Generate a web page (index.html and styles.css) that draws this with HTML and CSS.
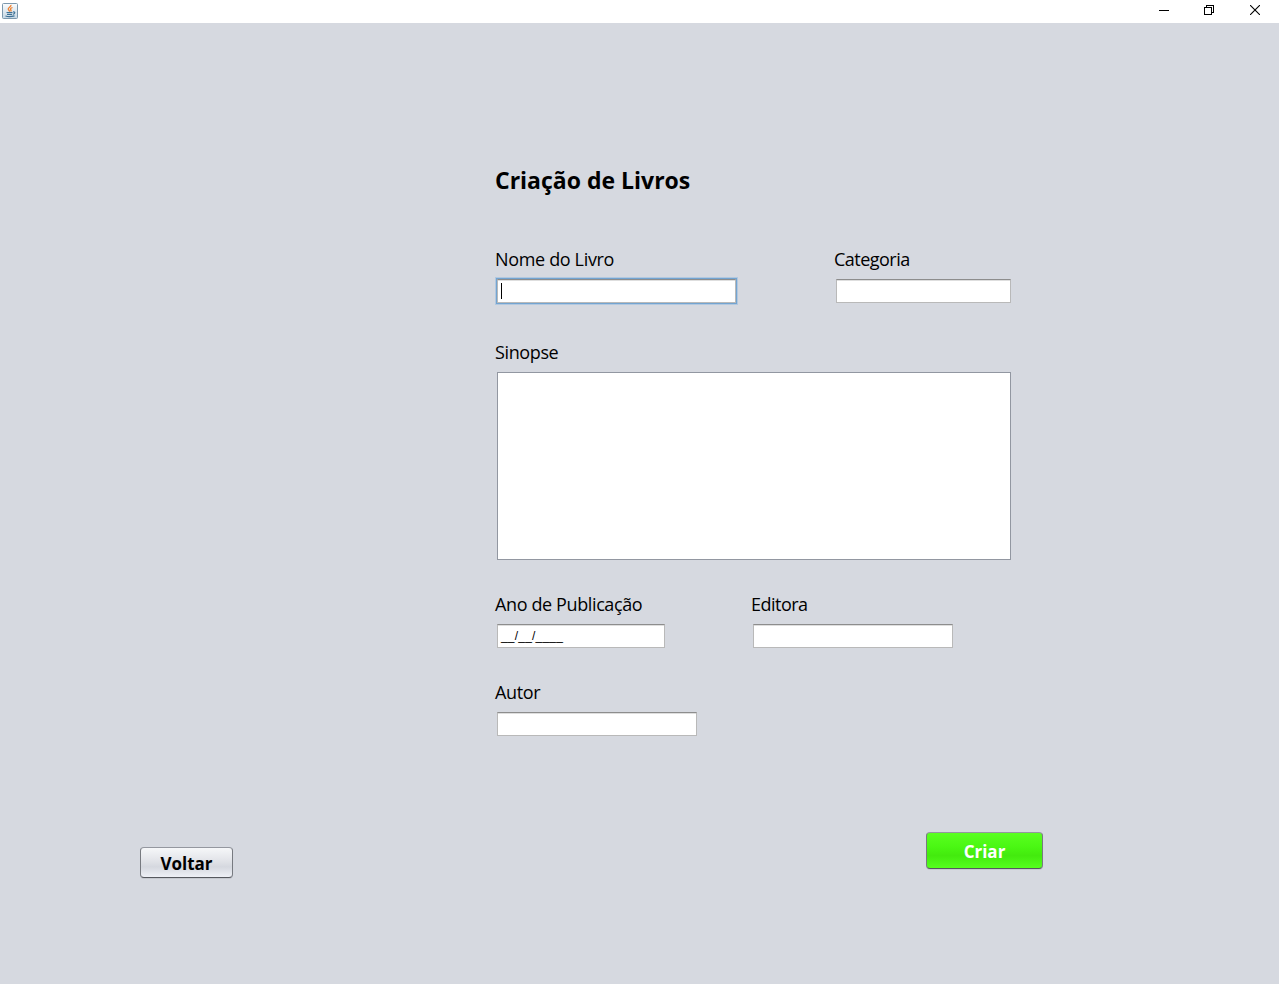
FILE: index.html
```html
<!DOCTYPE html>
<html lang="pt-BR">
<head>
<meta charset="utf-8">
<title>Criação de Livros</title>
<link rel="stylesheet" href="styles.css">
</head>
<body>
<header class="titlebar">
  <svg class="app-icon" width="16" height="16" viewBox="0 0 16 16" fill="none">
    <defs><linearGradient id="tile" x2="0" y2="1"><stop stop-color="#fafcfd"/><stop offset="1" stop-color="#c5d7e4"/></linearGradient></defs>
    <rect x=".5" y=".5" width="15" height="15" rx="1" fill="url(#tile)" stroke="#7c98ad"/>
    <path d="M9 1.800C9.500 4 5.500 4.500 6.300 6.500L7.800 8.500M10.500 4.500C7.500 5.500 8.500 6.500 9 7.200V8.500" stroke="#ee8130" stroke-width="1.300"/>
    <path d="M4.500 9.500H10.500M5 11.300H10M11 9Q13.500 8.600 12.500 10.300Q12 11 10.800 11.200M3.500 13Q7.500 14.200 12.500 12.800" stroke="#3e7195" stroke-width="1.200"/>
  </svg>
  <div class="controls">
    <svg width="10" height="10" viewBox="0 0 10 10" fill="none" stroke="#000" shape-rendering="crispEdges"><path d="M0 5.500H10"/></svg>
    <svg width="10" height="10" viewBox="0 0 10 10" fill="none" stroke="#000" shape-rendering="crispEdges"><path d="M.5 2.500H7.500V9.500H.5ZM2.500 2.500V.5H9.500V7.500H7.500"/></svg>
    <svg width="10" height="10" viewBox="0 0 10 10" fill="none" stroke="#000" stroke-width="1.100"><path d="M0 0L10 10M10 0L0 10"/></svg>
  </div>
</header>
<main>
  <form class="form">
    <h1>Criação de Livros</h1>
    <div class="row row-name">
      <label class="cell"><span class="caption t-nome">Nome do Livro</span><span class="field w-nome focused"><i class="caret"></i></span></label>
      <label class="cell"><span class="caption t-short">Categoria</span><span class="field w-cat"></span></label>
    </div>
    <label class="cell row-synopsis"><span class="caption">Sinopse</span><span class="area"></span></label>
    <div class="row row-year">
      <label class="cell"><span class="caption">Ano de Publicação</span><span class="field w-ano">__/__/____</span></label>
      <label class="cell"><span class="caption t-short">Editora</span><span class="field w-std"></span></label>
    </div>
    <label class="cell row-author"><span class="caption">Autor</span><span class="field w-std"></span></label>
  </form>
  <div class="actions">
    <button class="btn back" type="button">Voltar</button>
    <button class="btn create" type="button">Criar</button>
  </div>
</main>
</body>
</html>
```
FILE: styles.css
```css
* { box-sizing: border-box; }
body { margin: 0; height: 984px; overflow: hidden; background: #d6d9e0; color: #000; font-family: "Open Sans", "Noto Sans", sans-serif; }
.titlebar { height: 23px; background: #fff; display: flex; justify-content: space-between; padding: 3px 19px 0 2px; }
.app-icon { display: block; }
.controls { display: flex; gap: 35px; padding-top: 2px; }
.controls svg { display: block; }
.controls svg:last-child { margin-left: 1px; }
main { padding-top: 141px; }
.form { margin-left: 495px; width: 516px; }
h1 { margin: 0; height: 32px; font-size: 23px; line-height: 32px; font-weight: 700; white-space: nowrap; }
.row { display: flex; }
.cell { display: block; font-size: 18px; line-height: 24px; white-space: nowrap; }
.caption { display: block; height: 24px; line-height: 22px; letter-spacing: -.38px; }
.t-nome { letter-spacing: -.34px; }
.t-short { letter-spacing: -.52px; }
.row-name { margin-top: 52px; gap: 98px; }
.row-synopsis { margin-top: 38px; }
.row-year { margin-top: 33px; gap: 86px; }
.row-author { margin-top: 33px; }
.field { display: block; height: 24px; margin: 7px 0 0 2px; padding-left: 4px; background: #fff; border: 1px solid #b9b9b9; border-top-color: #8d8d8d; box-shadow: inset 0 1px #dedede; font: 12px/22px "Liberation Sans", Arial, sans-serif; letter-spacing: .2px; }
.focused { box-shadow: inset 0 1px #dedede, 0 0 0 1px #73a4d1, 0 0 0 2px #b2c8df; }
.w-nome { width: 239px; }
.w-cat { width: 175px; }
.w-ano { width: 168px; padding-left: 3px; }
.w-std { width: 200px; }
.caret { display: block; width: 1px; height: 16px; margin-top: 3px; margin-left: -1px; background: #000; }
.area { display: block; width: 514px; height: 188px; margin: 7px 0 0 2px; background: #fff; border: 1px solid #9297a1; }
.actions { display: flex; justify-content: space-between; align-items: flex-start; margin-top: 96px; padding: 0 236px 0 140px; }
.btn { border: 1px solid #777a80; border-top-color: #94979f; border-bottom-color: #55585e; border-radius: 4px; padding: 2px 0 0; font: 700 17px/24px "Open Sans", "Noto Sans", sans-serif; box-shadow: 0 1px #c5c8cf; }
.back { width: 93px; height: 31px; margin-top: 15px; background: linear-gradient(#f6f7f9, #e1e3e8 45%, #d5d8df 65%, #eef0f6); color: #000; }
.create { width: 117px; height: 37px; background: linear-gradient(#5aff20, #4af713 40%, #43ea0e 65%, #55ff1d); color: #fff; }
```
